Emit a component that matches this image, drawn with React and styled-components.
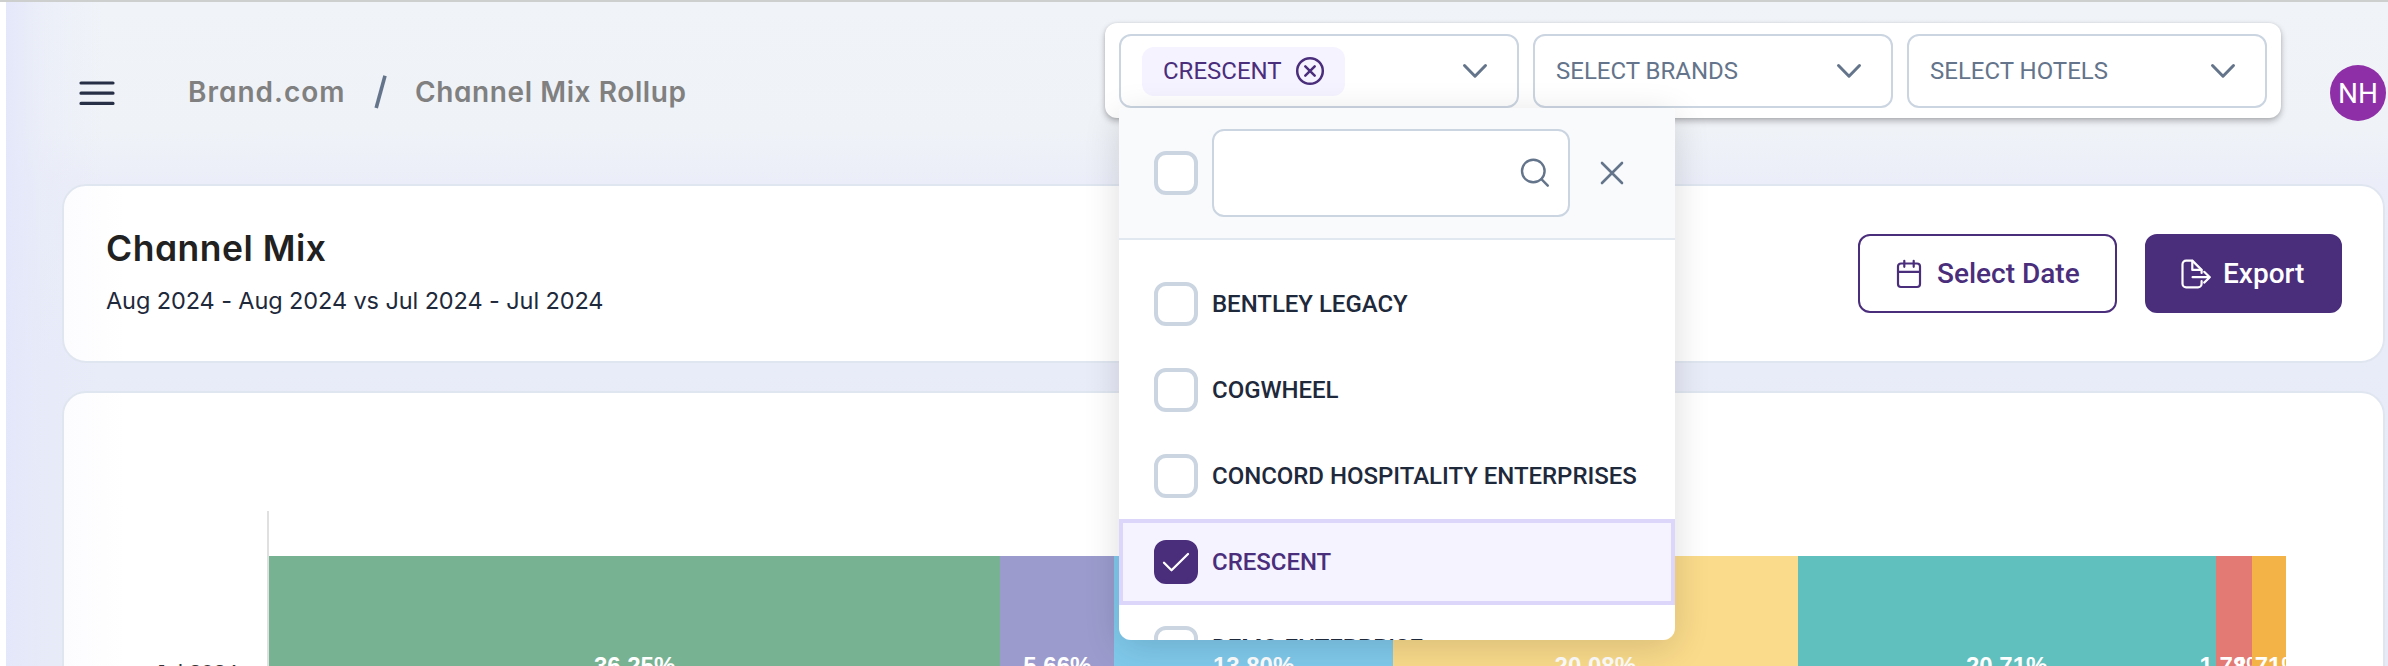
import React from "react";
import styled, { createGlobalStyle } from "styled-components";

const GlobalStyle = createGlobalStyle`
  *, *::before, *::after { box-sizing: border-box; }
  html, body { margin: 0; padding: 0; background: #fff; overflow: hidden; }
  body { font-family: Roboto, "Liberation Sans", sans-serif; color: #1e293b; }
  button { font: inherit; margin: 0; }
`;

const brand = "#4a2e7c";

const Page = styled.div`
  width: 100%;
  height: 666px;
  overflow: hidden;
  border-top: 2px solid #cdcfce;
  padding-left: 6px;
  background: #fff;
`;

const Main = styled.main`
  height: 664px;
  padding: 0 3px 0 56px;
  background:
    linear-gradient(90deg, rgba(227, 231, 250, 0.95) 0, rgba(229, 233, 249, 0.4) 36px, rgba(240, 243, 248, 0) 96px),
    linear-gradient(180deg, #f0f3f8 0, #eff2f7 130px, #ebeef8 180px, #e8ebf8 360px, #e8ebf7 100%);
`;

const Header = styled.header`
  height: 182px;
  display: flex;
  align-items: center;
`;

const MenuButton = styled.button`
  display: flex;
  padding: 0;
  border: 0;
  margin-left: 17px;
  background: none;
`;

const Crumbs = styled.nav`
  display: flex;
  align-items: center;
  margin: 0 0 2px 73px;
  font-family: Inter, sans-serif;
  font-feature-settings: "cv11";
  font-weight: 600;
  font-size: 28px;
  line-height: 36px;
  color: #808080;
  white-space: nowrap;
`;

const Crumb = styled.span`
  width: ${(p) => p.$width}px;
  letter-spacing: ${(p) => p.$spacing}px;
`;

const Slash = styled.svg`
  margin: 0 28px 0 29px;
`;

const Filters = styled.div`
  align-self: flex-start;
  display: flex;
  gap: 14px;
  height: 95px;
  margin: 21px 49px 0 auto;
  padding: 11px 14px 10px;
  border-radius: 12px;
  background: #fff;
  box-shadow: 0 3px 6px rgba(0, 0, 0, 0.28), 0 0 3px rgba(0, 0, 0, 0.08);
`;

const SelectWrap = styled.div`
  position: relative;
  width: ${(p) => p.$width}px;
`;

const Select = styled.div`
  display: flex;
  align-items: center;
  justify-content: space-between;
  height: 74px;
  padding: 0 29px 0 21px;
  border: 2px solid #cbd5e1;
  border-radius: 12px;
  background: #fff;
  font-size: 24px;
  color: #64748b;
`;

const Chip = styled.span`
  display: flex;
  align-items: center;
  gap: 13px;
  width: 203px;
  height: 49px;
  padding-left: 21px;
  border-radius: 12px;
  background: #f5f3ff;
  color: ${brand};
`;

const Avatar = styled.div`
  display: flex;
  align-items: center;
  justify-content: center;
  width: 56px;
  height: 56px;
  margin-right: -1px;
  border-radius: 50%;
  background: #8e2fa8;
  color: #fff;
  font-size: 28px;
`;

const Dropdown = styled.div`
  position: absolute;
  z-index: 5;
  top: 74px;
  left: 0;
  width: 556px;
  height: 532px;
  overflow: hidden;
  border-radius: 4px 4px 12px 12px;
  background: #fff;
`;

const DropdownShadow = styled.div`
  position: absolute;
  z-index: 4;
  top: 74px;
  left: 0;
  width: 556px;
  height: 532px;
  border-radius: 4px 4px 12px 12px;
  box-shadow: 0 8px 36px rgba(0, 0, 0, 0.14);
`;

const DropdownHead = styled.div`
  display: flex;
  align-items: center;
  height: 132px;
  padding: 0 0 0 35px;
  border-bottom: 2px solid #e2e8f0;
  background: #f8fafc;
`;

const SearchBox = styled.div`
  display: flex;
  align-items: center;
  justify-content: flex-end;
  width: 358px;
  height: 88px;
  margin: 0 30px 0 14px;
  padding-right: 18px;
  border: 2px solid #cbd5e1;
  border-radius: 12px;
  background: #fff;
`;

const Options = styled.div`
  padding-top: 21px;
`;

const Option = styled.div`
  display: flex;
  align-items: center;
  gap: 14px;
  height: 86px;
  padding-left: 31px;
  border: 4px solid ${(p) => (p.$on ? "#ddd6fb" : "transparent")};
  background: ${(p) => (p.$on ? "#f5f3ff" : "transparent")};
  color: ${(p) => (p.$on ? brand : "#1e293b")};
  font-size: 24px;
  font-weight: 500;
  letter-spacing: -0.03px;
  white-space: nowrap;
`;

const Checkbox = styled.span`
  display: flex;
  flex: none;
  align-items: center;
  justify-content: center;
  width: 44px;
  height: 44px;
  border: 4px solid ${(p) => (p.$on ? brand : "#cbd5e1")};
  border-radius: 12px;
  background: ${(p) => (p.$on ? brand : "#fff")};
`;

const Card = styled.section`
  border: 2px solid #e0e6f0;
  border-radius: 24px;
  background: linear-gradient(90deg, #fcfcff 0, #fff 60px);
`;

const TitleCard = styled(Card)`
  display: flex;
  align-items: center;
  justify-content: space-between;
  height: 179px;
  padding: 0 41px 0 42px;
`;

const Titles = styled.div`
  padding-bottom: 7px;
  font-family: Inter, sans-serif;
  font-feature-settings: "cv11";
  white-space: nowrap;
`;

const Title = styled.h1`
  margin: 0;
  font-size: 35.5px;
  line-height: 54px;
  font-weight: 600;
  letter-spacing: 0.5px;
  color: #212121;
`;

const Subtitle = styled.p`
  margin: 7px 0 0;
  font-size: 23.5px;
  line-height: 36px;
  letter-spacing: -0.1px;
  color: #1e293b;
`;

const Actions = styled.div`
  display: flex;
  gap: 28px;
`;

const Button = styled.button`
  display: flex;
  align-items: center;
  gap: ${(p) => p.$gap}px;
  width: ${(p) => p.$width}px;
  height: 79px;
  padding: 0 0 0 ${(p) => p.$inset}px;
  border: 2px solid ${brand};
  border-radius: 12px;
  background: ${(p) => (p.$solid ? brand : "#fff")};
  color: ${(p) => (p.$solid ? "#fff" : brand)};
  font-size: 28px;
  font-weight: 500;
  white-space: nowrap;
`;

const ChartCard = styled(Card)`
  height: 420px;
  margin-top: 28px;
  padding: 118px 0 0 42px;
`;

const Plot = styled.div`
  display: flex;
`;

const AxisLabel = styled.div`
  width: 161px;
  padding: 147px 29px 0 0;
  text-align: right;
  font-family: "Liberation Sans", sans-serif;
  font-size: 22px;
  line-height: 30px;
  color: #333;
  white-space: nowrap;
`;

const Bars = styled.div`
  display: flex;
  width: 2019px;
  height: 300px;
  padding-top: 45px;
  border-left: 2px solid #e0e0e0;
`;

const Segment = styled.div`
  display: flex;
  justify-content: center;
  flex: ${(p) => p.$value} 0 0;
  min-width: 0;
  height: 250px;
  padding-top: 95px;
  background: ${(p) => p.$color};
  font-family: "Liberation Sans", sans-serif;
  font-size: 24px;
  font-weight: 700;
  line-height: 30px;
  color: #fff;
  white-space: nowrap;
`;

const Chevron = () => (
  <svg width="26" height="18" viewBox="0 0 26 18" fill="none" stroke="#64748b" strokeWidth="3" strokeLinecap="round" strokeLinejoin="round">
    <path d="M2.5 3.5 13 14.2 23.5 3.5" />
  </svg>
);

const options = ["BENTLEY LEGACY", "COGWHEEL", "CONCORD HOSPITALITY ENTERPRISES", "CRESCENT", "DEMO ENTERPRISE"];

const segments = [
  ["36.25", "#77b292"],
  ["5.66", "#9b9bcd"],
  ["13.80", "#80caec"],
  ["20.08", "#fadb8b"],
  ["20.71", "#60c0be"],
  ["1.78", "#e37a73"],
  ["1.71", "#f3b346"],
];

export default function App() {
  return (
    <>
      <GlobalStyle />
      <Page>
        <Main>
          <Header>
            <MenuButton aria-label="Menu">
              <svg width="36" height="26" viewBox="0 0 36 26" stroke="#272f47" strokeWidth="3.2" strokeLinecap="round">
                <path d="M2 3h32M2 13.2h32M2 23.4h32" />
              </svg>
            </MenuButton>
            <Crumbs>
              <Crumb $width={157} $spacing={1}>Brand.com</Crumb>
              <Slash width="13" height="34" viewBox="0 0 13 34" stroke="#64748b" strokeWidth="3.6">
                <path d="M11 .8 2.2 33" />
              </Slash>
              <Crumb $width={272} $spacing={0.6}>Channel Mix Rollup</Crumb>
            </Crumbs>
            <Filters>
              <SelectWrap $width={400}>
                <Select>
                  <Chip>
                    CRESCENT
                    <svg width="30" height="30" viewBox="0 0 30 30" fill="none" stroke={brand} strokeWidth="2.5" strokeLinecap="round">
                      <circle cx="15" cy="15" r="12.8" />
                      <path d="m10.3 10.3 9.4 9.4m0-9.4-9.4 9.4" />
                    </svg>
                  </Chip>
                  <Chevron />
                </Select>
                <DropdownShadow />
                <Dropdown>
                  <DropdownHead>
                    <Checkbox />
                    <SearchBox>
                      <svg width="30" height="30" viewBox="0 0 30 30" fill="none" stroke="#64748b" strokeWidth="2.4" strokeLinecap="round">
                        <circle cx="13.3" cy="13" r="11.3" />
                        <path d="m21.4 21.1 6.4 6.6" />
                      </svg>
                    </SearchBox>
                    <svg width="24" height="24" viewBox="0 0 24 24" stroke="#64748b" strokeWidth="2.6" strokeLinecap="round">
                      <path d="m2 2 20 20M22 2 2 22" />
                    </svg>
                  </DropdownHead>
                  <Options>
                    {options.map((name) => {
                      const on = name === "CRESCENT";
                      return (
                        <Option key={name} $on={on}>
                          <Checkbox $on={on}>
                            {on && (
                              <svg width="28" height="20" viewBox="0 0 28 20" fill="none" stroke="#fff" strokeWidth="2.3" strokeLinecap="round" strokeLinejoin="round">
                                <path d="m2 10.8 7.5 7.4L26 2" />
                              </svg>
                            )}
                          </Checkbox>
                          {name}
                        </Option>
                      );
                    })}
                  </Options>
                </Dropdown>
              </SelectWrap>
              <SelectWrap $width={360}>
                <Select>SELECT BRANDS<Chevron /></Select>
              </SelectWrap>
              <SelectWrap $width={360}>
                <Select>SELECT HOTELS<Chevron /></Select>
              </SelectWrap>
            </Filters>
            <Avatar>NH</Avatar>
          </Header>

          <TitleCard>
            <Titles>
              <Title>Channel Mix</Title>
              <Subtitle>Aug 2024 - Aug 2024 vs Jul 2024 - Jul 2024</Subtitle>
            </Titles>
            <Actions>
              <Button $width={259} $inset={34} $gap={13}>
                <svg width="30" height="30" viewBox="0 0 30 30" fill="none" stroke={brand} strokeWidth="2.2" strokeLinecap="round" strokeLinejoin="round">
                  <rect x="4" y="4.5" width="22" height="23.5" rx="3" />
                  <path d="M4 12.8h22M10.3 1.8v6M19.7 1.8v6" />
                </svg>
                Select Date
              </Button>
              <Button $width={197} $inset={33} $gap={11} $solid>
                <svg width="32" height="30" viewBox="0 0 32 30" fill="none" stroke="#fff" strokeWidth="2.2" strokeLinecap="round" strokeLinejoin="round">
                  <path d="M21.6 22.2v2.6a3.6 3.6 0 0 1-3.6 3.6H6.1a3.6 3.6 0 0 1-3.6-3.6V5.2a3.6 3.6 0 0 1 3.6-3.6h6.2l9.3 9.3v3" />
                  <path d="M12.3 1.8v9.1h9.1M12.6 18.2h17.2m-5.6-5.4 5.6 5.4-5.6 5.4" />
                </svg>
                Export
              </Button>
            </Actions>
          </TitleCard>

          <ChartCard>
            <Plot>
              <AxisLabel>Jul 2024</AxisLabel>
              <Bars>
                {segments.map(([value, color]) => (
                  <Segment key={value} $value={Number(value)} $color={color}>
                    {value}%
                  </Segment>
                ))}
              </Bars>
            </Plot>
          </ChartCard>
        </Main>
      </Page>
    </>
  );
}
